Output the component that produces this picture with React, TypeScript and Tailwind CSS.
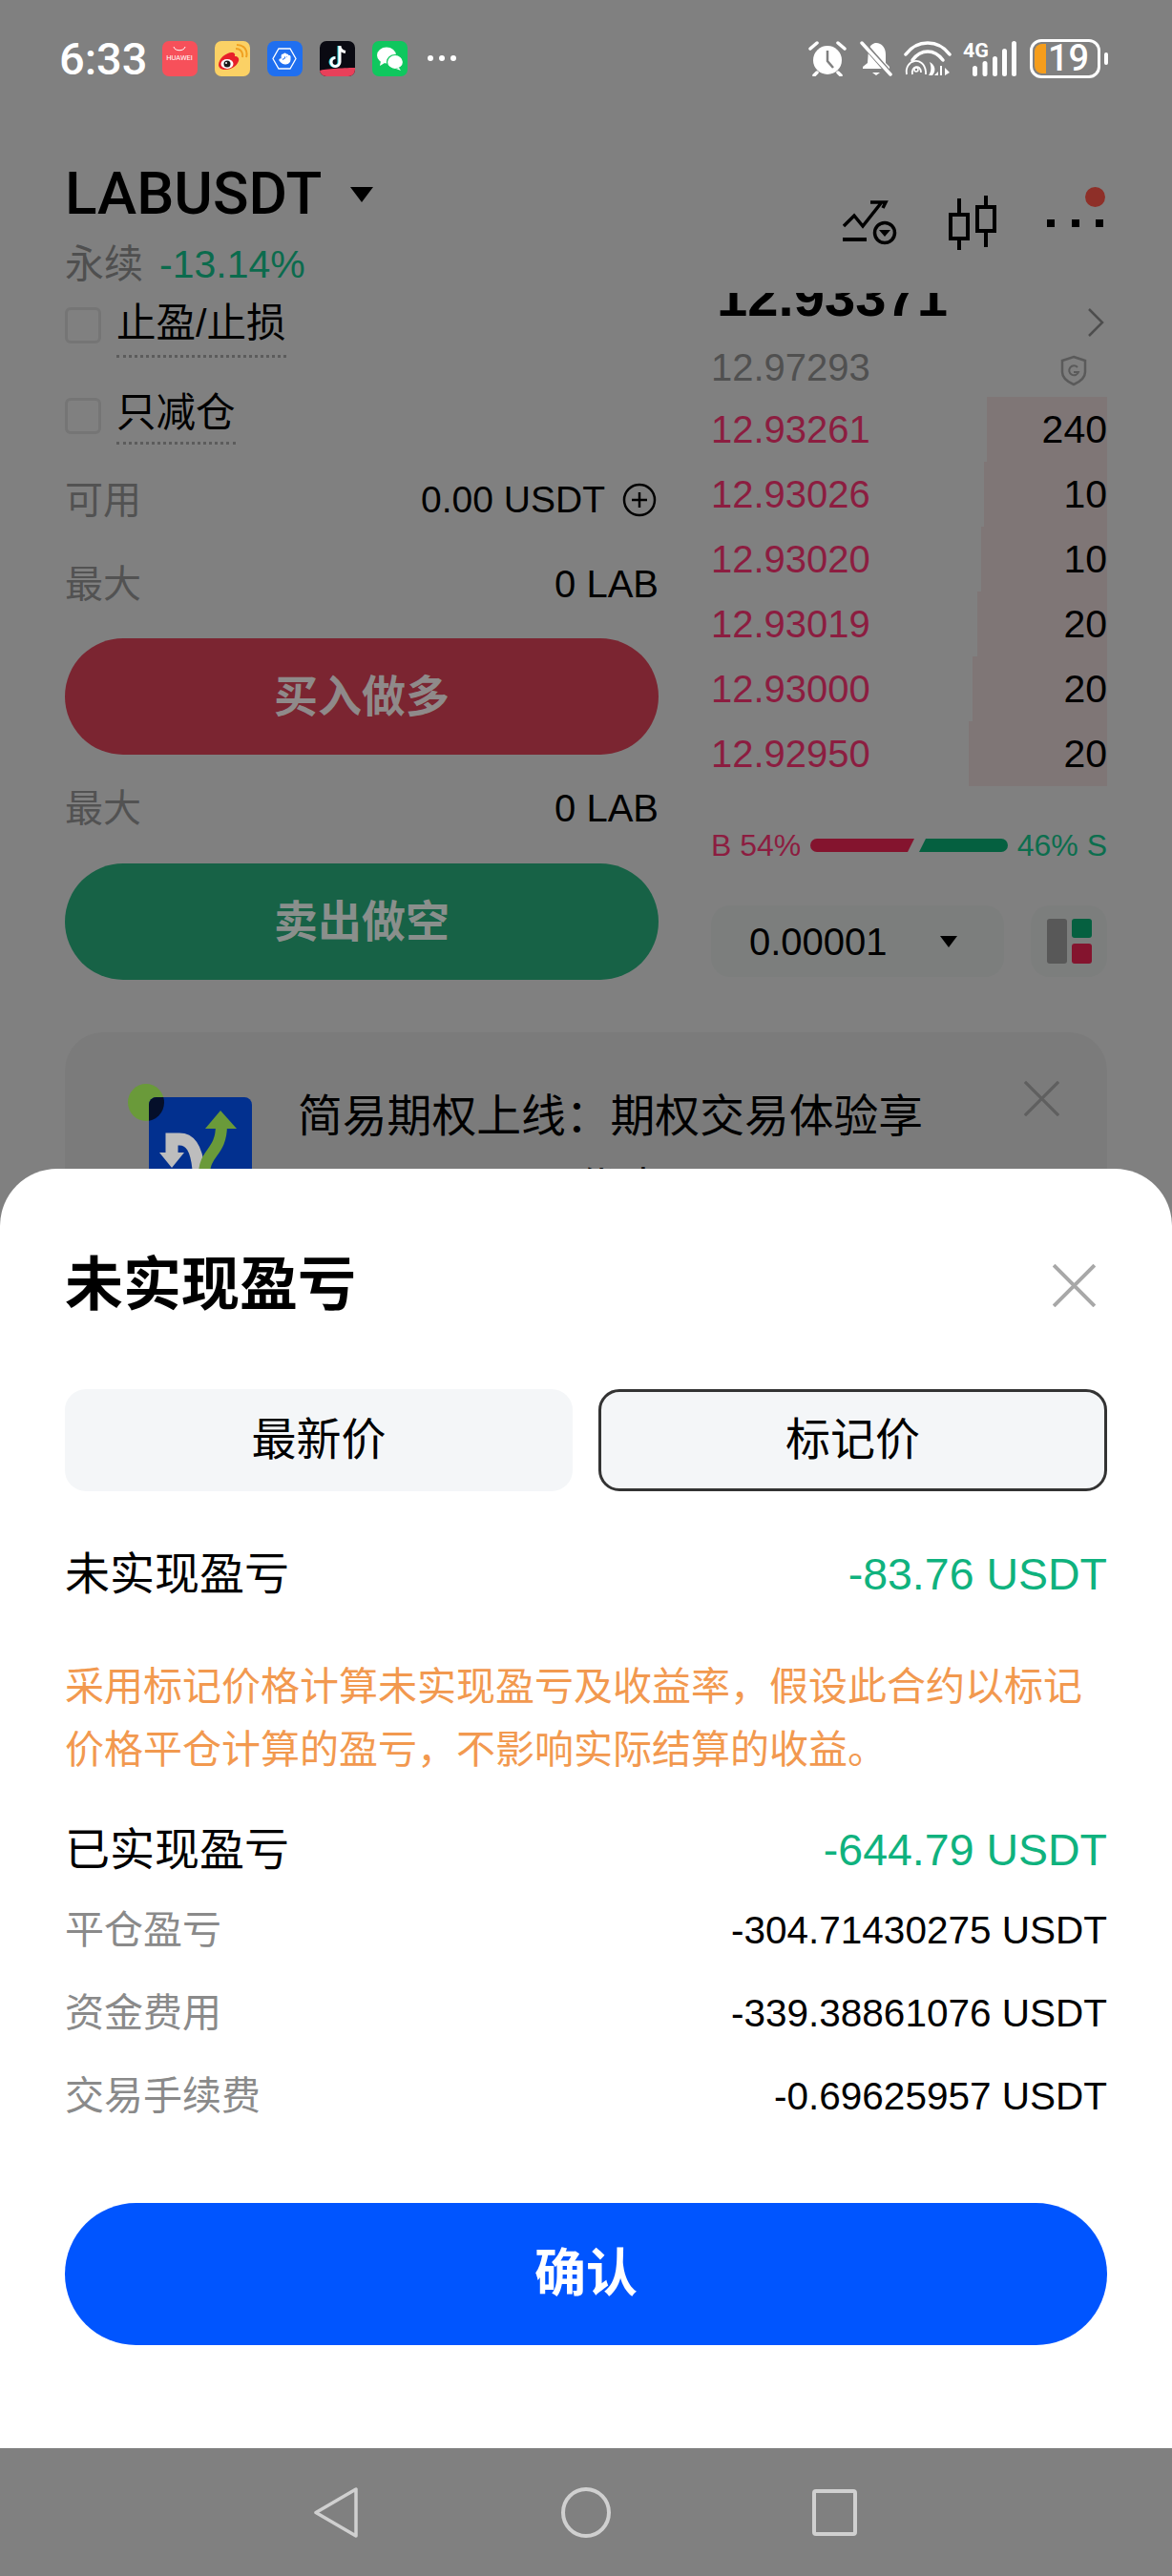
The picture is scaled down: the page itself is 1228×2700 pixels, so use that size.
import { Hand } from "lucide-react";

const asks = [
  { price: "12.93261", qty: "240", w: "w-[126px]" },
  { price: "12.93026", qty: "10", w: "w-[129px]" },
  { price: "12.93020", qty: "10", w: "w-[132px]" },
  { price: "12.93019", qty: "20", w: "w-[136px]" },
  { price: "12.93000", qty: "20", w: "w-[141px]" },
  { price: "12.92950", qty: "20", w: "w-[145px]" },
];

const fees = [
  { label: "平仓盈亏", value: "-304.71430275 USDT" },
  { label: "资金费用", value: "-339.38861076 USDT" },
  { label: "交易手续费", value: "-0.69625957 USDT" },
];

function AppIcons() {
  return (
    <div className="ml-[15px] flex items-center gap-[18px]">
      <div className="flex h-[37px] w-[37px] flex-col items-center rounded-[7px] bg-[#f7505a] pt-[5px]">
        <svg width="14" height="6" viewBox="0 0 14 6" fill="none">
          <path d="M1 1c1 5 11 5 12 0" stroke="#fff" strokeWidth="1" />
        </svg>
        <span className="mt-[2px] font-['Roboto',sans-serif] text-[7.5px] leading-[10px] text-white">HUAWEI</span>
      </div>
      <svg width="37" height="37" viewBox="0 0 37 37">
        <rect width="37" height="37" rx="7" fill="#fbd165" />
        <path d="M4 25c0-7 9-14 15-13 3 1 2 3 2 4 3 0 5 2 4 5-2 6-9 9-14 9-4 0-7-2-7-5z" fill="#e8202a" />
        <ellipse cx="13" cy="24" rx="6.5" ry="5" fill="#fff" />
        <circle cx="13" cy="24" r="3.5" fill="#1a1a1a" />
        <circle cx="12" cy="23" r="1" fill="#fff" />
        <path d="M22 8c5 0 8 4 7 9M23 4c8 0 12 6 10 13" stroke="#f0a020" strokeWidth="2" fill="none" />
      </svg>
      <div className="flex h-[37px] w-[37px] items-center justify-center rounded-[8px] bg-[#1f6ff0]">
        <svg width="26" height="23" viewBox="0 0 26 23" fill="none" className="relative">
          <path d="M7 1h12l6 10.500-6 10.500H7L1 11.500z" stroke="#fff" strokeWidth="1.300" />
        </svg>
        <Hand size={13} strokeWidth={2.200} className="absolute fill-white text-white" />
      </div>
      <svg width="37" height="37" viewBox="0 0 37 37">
        <rect width="37" height="37" rx="7" fill="#0a0a12" />
        <path d="M20 5v17a4.500 4.500 0 1 1-4.500-4.500" stroke="#27d3e0" strokeWidth="3" fill="none" />
        <path d="M21 5v17a4.500 4.500 0 1 1-4.500-4.500M21 6c.5 3 3 5 6 5.500" stroke="#fff" strokeWidth="3" fill="none" />
        <path d="M0 31c4-2 30-3 37-3v2a7 7 0 0 1-7 7H7a7 7 0 0 1-7-6z" fill="#e8405a" />
      </svg>
      <svg width="37" height="37" viewBox="0 0 37 37">
        <rect width="37" height="37" rx="7" fill="#0fc75e" />
        <ellipse cx="15" cy="15" rx="10" ry="8.500" fill="#fff" />
        <path d="M9 21l-1 5 5-3z" fill="#fff" />
        <ellipse cx="24" cy="22" rx="8.500" ry="7.500" fill="#fff" stroke="#0fc75e" strokeWidth="1.200" />
        <path d="M28 28l2 3-5-2z" fill="#fff" />
      </svg>
      <div className="ml-[3px] flex w-[30px] justify-between">
        <span className="h-[6px] w-[6px] rounded-full bg-white" />
        <span className="h-[6px] w-[6px] rounded-full bg-white" />
        <span className="h-[6px] w-[6px] rounded-full bg-white" />
      </div>
    </div>
  );
}

function StatusRight() {
  return (
    <div className="ml-auto flex items-center pr-[67px]">
      <svg width="40" height="38" viewBox="0 0 40 38" fill="none">
        <circle cx="20" cy="21" r="15" fill="#fff" />
        <path d="M20 11v11l6 7" stroke="#808080" strokeWidth="2.500" />
        <path d="M2 9l7-6M38 9l-7-6M9 34l-3 3M31 34l3 3" stroke="#fff" strokeWidth="3.500" strokeLinecap="round" />
      </svg>
      <svg width="34" height="38" viewBox="0 0 34 38" fill="none" className="ml-[14px]">
        <path d="M9 10c2-5 5-7 8-7 6 0 10 5 10 12v9l4 4v2H3v-2l5-4z" fill="#fff" />
        <path d="M13 34h8l-4 3z" fill="#fff" />
        <path d="M2 2l30 34" stroke="#808080" strokeWidth="6" />
        <path d="M2 3l30 33" stroke="#fff" strokeWidth="3.500" strokeLinecap="round" />
      </svg>
      <svg width="50" height="40" viewBox="0 0 50 40" fill="none" className="ml-[12px]">
        <path d="M2 16C14 0 36 0 48 16" stroke="#fff" strokeWidth="3.500" strokeLinecap="round" />
        <path d="M9 22C18 10 32 10 41 22" stroke="#fff" strokeWidth="3.500" strokeLinecap="round" />
        <path d="M3 37c-3-16 18-20 20-3v3M9 37c-2-9 9-11 9-2" stroke="#fff" strokeWidth="1.800" />
        <circle cx="13" cy="32" r="2" stroke="#fff" strokeWidth="1.500" />
        <path d="M26 38c3-4 3-9 1-14 6 3 7 9 3 14zM36 38v-4l-4 4zM38 28v10h2V28zM43 30v8l5-3z" fill="#fff" />
      </svg>
      <svg width="57" height="38" viewBox="0 0 57 38" fill="#fff" className="ml-[12px]">
        <text x="0" y="18" fontFamily="'Roboto', sans-serif" fontWeight="700" fontSize="20" textLength="27" lengthAdjust="spacingAndGlyphs">
          4G
        </text>
        <rect x="10" y="27" width="5" height="11" rx="2.500" />
        <rect x="20.500" y="22" width="5" height="16" rx="2.500" />
        <rect x="31" y="17" width="5" height="21" rx="2.500" />
        <rect x="41" y="9" width="5" height="29" rx="2.500" />
        <rect x="51" y="1" width="5" height="37" rx="2.500" />
      </svg>
      <div className="ml-[13px] flex h-[41px] w-[74px] items-center overflow-hidden rounded-[12px] border-[3px] border-white pl-[2px]">
        <div className="h-[31px] w-[12px] rounded-l-[8px] bg-[#f59d1c]" />
        <span className="ml-[2px] font-['Roboto',sans-serif] text-[38px] font-medium leading-none text-white">19</span>
      </div>
      <div className="ml-[4px] h-[13px] w-[4px] rounded-full bg-white" />
    </div>
  );
}

function ChartIcon() {
  return (
    <svg width="57" height="47" viewBox="0 0 57 47" fill="none" stroke="#000" strokeWidth="3.500">
      <path d="M1 27l11-11 9 11L40 3M29 2h16l-3 6" />
      <path d="M0 41h25" strokeWidth="4" />
      <circle cx="44" cy="34" r="10.500" />
      <path d="M38 31h12l-6 7z" fill="#000" stroke="none" />
    </svg>
  );
}

function CandleIcon() {
  return (
    <svg width="50" height="57" viewBox="0 0 50 57" fill="none" stroke="#000" strokeWidth="4">
      <rect x="2" y="20" width="18" height="25" />
      <path d="M11 3v17M11 45v12" />
      <rect x="30" y="12" width="18" height="25" />
      <path d="M39 0v12M39 37v17" />
    </svg>
  );
}

function BannerIcon() {
  return (
    <svg width="130" height="140" viewBox="0 0 130 140" className="shrink-0">
      <defs>
        <clipPath id="blue-card">
          <rect x="22" y="14" width="108" height="130" rx="8" />
        </clipPath>
      </defs>
      <ellipse cx="19" cy="19.500" rx="19" ry="19.500" fill="#6a9a3a" />
      <rect x="22" y="14" width="108" height="130" rx="8" fill="#02308f" />
      <ellipse cx="19" cy="19.500" rx="19" ry="19.500" fill="#050f2a" clipPath="url(#blue-card)" />
      <path d="M46 76V58h8c12 0 18 10 20 32" stroke="#bdbdbd" strokeWidth="13" fill="none" />
      <path d="M33 72h26L46 88z" fill="#bdbdbd" />
      <path d="M80 95c0-24 18-22 18-52" stroke="#6a9a3a" strokeWidth="12" fill="none" />
      <path d="M97 28l17 19H81z" fill="#6a9a3a" />
    </svg>
  );
}

function CloseIcon({ size, color, stroke }: { size: number; color: string; stroke: number }) {
  return (
    <svg width={size} height={size} viewBox="0 0 40 40" fill="none" stroke={color} strokeWidth={stroke} className="shrink-0">
      <path d="M1 1l38 38M39 1L1 39" />
    </svg>
  );
}

function TradePanel() {
  return (
    <div className="w-[622px] shrink-0 pt-[5px]">
      <div className="flex items-start">
        <div className="mt-[10px] h-[38px] w-[38px] rounded-[6px] border-[3px] border-[#757575]" />
        <span className="ml-[16px] border-b-[3px] border-dotted border-[#5c5c5c] pb-[7px] pt-[1px] text-[41.5px] leading-[52px] text-black">止盈/止损</span>
      </div>
      <div className="mt-[31px] flex items-start">
        <div className="mt-[11px] h-[38px] w-[38px] rounded-[6px] border-[3px] border-[#757575]" />
        <span className="ml-[16px] border-b-[3px] border-dotted border-[#5c5c5c] pb-[4px] pt-[1px] text-[41.5px] leading-[52px] text-black">只减仓</span>
      </div>
      <div className="mt-[32px] flex items-center justify-between text-[40px] leading-[52px]">
        <span className="text-[#525252]">可用</span>
        <span className="flex items-center text-[39px] text-black">
          0.00 USDT
          <svg width="36" height="36" viewBox="0 0 36 36" fill="none" stroke="#000" strokeWidth="2.500" className="ml-[18px] mr-[2px]">
            <circle cx="18" cy="18" r="16" />
            <path d="M18 10v16M10 18h16" />
          </svg>
        </span>
      </div>
      <div className="mt-[36px] flex items-center justify-between text-[40px] leading-[52px]">
        <span className="text-[#525252]">最大</span>
        <span className="text-black">0 LAB</span>
      </div>
      <div className="mt-[31px] flex h-[122px] items-center justify-center rounded-full bg-[#7b2531] text-[46px] font-bold text-[#8f8a8a]">买入做多</div>
      <div className="mt-[30px] flex items-center justify-between text-[40px] leading-[52px]">
        <span className="text-[#525252]">最大</span>
        <span className="text-black">0 LAB</span>
      </div>
      <div className="mt-[32px] flex h-[122px] items-center justify-center rounded-full bg-[#176246] text-[46px] font-bold text-[#8a8f8c]">卖出做空</div>
    </div>
  );
}

function OrderBook() {
  return (
    <div className="ml-[55px] w-[415px] shrink-0 -mt-[24px]">
      <div className="flex h-[76px] items-start justify-between">
        <span className="ml-[6px] text-[58px] font-bold leading-[56px] text-black">12.93371</span>
        <svg width="18" height="30" viewBox="0 0 18 30" fill="none" stroke="#4d4d4d" strokeWidth="2.500" className="mt-[40px] mr-[3px]">
          <path d="M2 1l14 14L2 29" />
        </svg>
      </div>
      <div className="flex h-[57px] items-start justify-between">
        <span className="text-[40px] leading-[52px] text-[#505050]">12.97293</span>
        <svg width="30" height="33" viewBox="0 0 30 33" fill="none" stroke="#5a5a5a" strokeWidth="2.500" className="mt-[13px] mr-[20px]">
          <path d="M15 2l12 4v12c0 6-5 10-12 13C8 28 3 24 3 18V6z" />
          <path d="M19 13a5 5 0 1 0 1 5h-5" strokeWidth="2" />
        </svg>
      </div>
      {asks.map((row) => (
        <div key={row.price} className="flex h-[68px] items-center justify-between">
          <span className="text-[40px] leading-[52px] text-[#8c1d40]">{row.price}</span>
          <span className={`flex h-full items-center justify-end bg-[#7f7676] text-[41px] leading-[52px] text-black ${row.w}`}>{row.qty}</span>
        </div>
      ))}
      <div className="mt-[46px] flex h-[32px] items-center justify-between text-[32px] leading-[32px]">
        <span className="text-[#8c1d40]">B 54%</span>
        <svg width="207" height="14" viewBox="0 0 207 14" className="mx-[6px]">
          <path d="M7 0h102l-7 14H7a7 7 0 0 1 0-14z" fill="#84142e" />
          <path d="M121 0h79a7 7 0 0 1 0 14h-86z" fill="#056040" />
        </svg>
        <span className="text-[#0c6e4e]">46% S</span>
      </div>
      <div className="mt-[47px] flex items-center justify-between">
        <div className="flex h-[75px] w-[307px] items-center rounded-[20px] bg-[#7c7e7d] pl-[40px] text-[40px] text-black">
          0.00001
          <svg width="18" height="12" viewBox="0 0 18 12" className="ml-[55px]">
            <path d="M0 0h18l-9 12z" fill="#000" />
          </svg>
        </div>
        <div className="flex h-[75px] w-[80px] items-center justify-center gap-[5px] rounded-[20px] bg-[#7c7e7d]">
          <div className="h-[47px] w-[21px] rounded-[3px] bg-[#585858]" />
          <div className="flex h-[47px] w-[21px] flex-col justify-between">
            <div className="h-[20px] rounded-[3px] bg-[#056040]" />
            <div className="h-[21px] rounded-[3px] bg-[#84142e]" />
          </div>
        </div>
      </div>
    </div>
  );
}

export default function App() {
  return (
    <div className="flex h-[2700px] w-[1228px] flex-col overflow-hidden bg-[#808080] font-['Liberation_Sans','Noto_Sans_CJK_SC',sans-serif]">
      <div className="h-[1225px] shrink-0 overflow-hidden">
        <div className="flex h-[122px] items-center pl-[62px]">
          <span className="font-['Roboto',sans-serif] text-[47px] font-medium leading-none text-white">6:33</span>
          <AppIcons />
          <StatusRight />
        </div>

        <div className="flex h-[185px] justify-between px-[68px]">
          <div className="pt-[45px]">
            <div className="flex items-center">
              <span className="font-['Roboto',sans-serif] text-[62px] font-medium leading-[72px] text-black">LABUSDT</span>
              <svg width="24" height="16" viewBox="0 0 24 16" className="ml-[30px] mt-[2px]">
                <path d="M0 0h24L12 16z" fill="#000" />
              </svg>
            </div>
            <div className="mt-[12px] flex items-center text-[41px] leading-[52px]">
              <span className="text-[#4f4f4f]">永续</span>
              <span className="ml-[17px] text-[#0b6b4d]">-13.14%</span>
            </div>
          </div>
          <div className="mt-[83px] flex h-[57px] items-center gap-[54px] pr-[4px]">
            <ChartIcon />
            <CandleIcon />
            <div className="relative -ml-[1px] flex w-[59px] justify-between">
              <span className="h-[8px] w-[8px] bg-black" />
              <span className="h-[8px] w-[8px] bg-black" />
              <span className="h-[8px] w-[8px] bg-black" />
              <span className="absolute -right-[2px] -top-[34px] h-[21px] w-[21px] rounded-full bg-[#8e2f28]" />
            </div>
          </div>
        </div>

        <div className="flex h-[775px] items-start overflow-hidden px-[68px]">
          <TradePanel />
          <OrderBook />
        </div>

        <div className="mx-[68px] flex rounded-t-[40px] bg-[#7b7b7b] pl-[66px] pr-[50px] pt-[54px]">
          <BannerIcon />
          <div className="ml-[48px] -mt-[2px] flex-1 text-[46.8px] leading-[73px] text-black">
            <div className="whitespace-nowrap">简易期权上线：期权交易体验享</div>
            <div className="pl-[292px] pt-[4px]">优惠</div>
          </div>
          <div className="-mt-[3px]">
            <CloseIcon size={37} color="#5f5f5f" stroke={3.500} />
          </div>
        </div>
      </div>

      <div className="h-[1341px] shrink-0 rounded-t-[60px] bg-white px-[68px] pt-[86px]">
        <div className="flex h-[72px] items-center justify-between">
          <span className="text-[61px] font-bold leading-[72px] text-black">未实现盈亏</span>
          <div className="mr-[12px]">
            <CloseIcon size={45} color="#a8a8a8" stroke={3.500} />
          </div>
        </div>

        <div className="mt-[73px] flex justify-between text-[47px] text-black">
          <div className="flex h-[107px] w-[532px] items-center justify-center rounded-[22px] bg-[#f4f6f8]">最新价</div>
          <div className="flex h-[107px] w-[533px] items-center justify-center rounded-[22px] border-[3px] border-[#333] bg-[#f4f6f8]">标记价</div>
        </div>

        <div className="mt-[57px] flex items-center justify-between leading-[60px]">
          <span className="text-[47px] text-black">未实现盈亏</span>
          <span className="text-[46.5px] text-[#0fb27e]">-83.76 USDT</span>
        </div>
        <p className="mt-[55px] text-[41px] leading-[66px] text-[#f2994f]">采用标记价格计算未实现盈亏及收益率，假设此合约以标记价格平仓计算的盈亏，不影响实际结算的收益。</p>
        <div className="mt-[42px] flex items-center justify-between leading-[60px]">
          <span className="text-[47px] text-black">已实现盈亏</span>
          <span className="text-[46.5px] text-[#0fb27e]">-644.79 USDT</span>
        </div>
        <div className="mt-[28px] flex flex-col gap-[35px]">
          {fees.map((fee) => (
            <div key={fee.label} className="flex items-center justify-between leading-[52px]">
              <span className="text-[41px] text-[#8a8a8a]">{fee.label}</span>
              <span className="text-[40.5px] text-black">{fee.value}</span>
            </div>
          ))}
        </div>
        <button className="mt-[86px] flex h-[149px] w-full items-center justify-center rounded-full bg-[#0055ff] text-[54px] font-bold text-white">确认</button>
      </div>

      <div className="flex h-[134px] shrink-0 items-center pl-[329px]">
        <svg width="46" height="53" viewBox="0 0 46 53" fill="none" stroke="#d0d0d0" strokeWidth="3.500" strokeLinejoin="round">
          <path d="M44 2v49L2 26.500z" />
        </svg>
        <svg width="52" height="53" viewBox="0 0 52 53" fill="none" stroke="#d0d0d0" strokeWidth="4" className="ml-[213px]">
          <ellipse cx="26" cy="26.500" rx="24" ry="24.500" />
        </svg>
        <svg width="47" height="49" viewBox="0 0 47 49" fill="none" stroke="#d0d0d0" strokeWidth="4" className="ml-[211px]">
          <rect x="2" y="2" width="43" height="45" rx="2" />
        </svg>
      </div>
    </div>
  );
}
